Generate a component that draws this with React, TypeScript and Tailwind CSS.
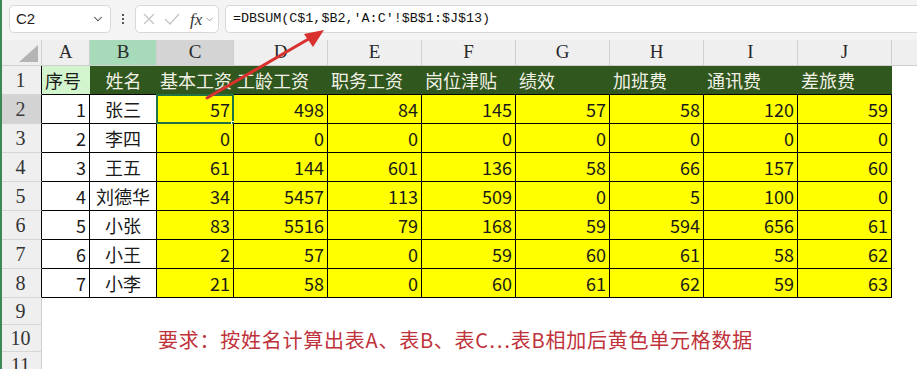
import { ChevronDown } from 'lucide-react';

const widths = ['w-[42px]', 'w-[48px]', 'w-[67px]', 'w-[77px]', 'w-[94px]', 'w-[94px]', 'w-[94px]', 'w-[94px]', 'w-[94px]', 'w-[94px]', 'w-[94px]'];
const letters = ['A', 'B', 'C', 'D', 'E', 'F', 'G', 'H', 'I', 'J'];
const titles = ['序号', '姓名', '基本工资', '工龄工资', '职务工资', '岗位津贴', '绩效', '加班费', '通讯费', '差旅费'];

const data: (number | string)[][] = [
  [1, '张三', 57, 498, 84, 145, 57, 58, 120, 59],
  [2, '李四', 0, 0, 0, 0, 0, 0, 0, 0],
  [3, '王五', 61, 144, 601, 136, 58, 66, 157, 60],
  [4, '刘德华', 34, 5457, 113, 509, 0, 5, 100, 0],
  [5, '小张', 83, 5516, 79, 168, 59, 594, 656, 61],
  [6, '小王', 2, 57, 0, 59, 60, 61, 58, 62],
  [7, '小李', 21, 58, 0, 60, 61, 62, 59, 63],
];

const serif = "font-['Liberation_Serif','Times_New_Roman',serif]";
const cjk = "font-['Noto_Sans_CJK_SC',sans-serif]";

function RowHead({ n, selected, dark }: { n: number; selected?: boolean; dark?: boolean }) {
  return (
    <div
      className={`${widths[0]} h-full shrink-0 flex items-center justify-center border-b border-b-[#d6d6d6] border-r ${dark ? 'border-r-black' : 'border-r-[#cfcfcf]'} ${selected ? 'bg-[#d3d3d3] text-[#3c3c3c]' : 'bg-[#efefef] text-[#333]'} ${serif} text-[20px]`}
    >
      {n}
    </div>
  );
}

function FormulaBar() {
  return (
    <div className="h-[40px] flex items-start pt-[5px] bg-[#f4f4f4]">
      <div className="ml-[9px] w-[102px] h-[28px] rounded-[5px] border border-[#d8d8d8] bg-white flex items-center justify-between pl-[6px] pr-[5px]">
        <span className="font-['Liberation_Sans',sans-serif] text-[15px] text-[#222]">C2</span>
        <ChevronDown size={14} strokeWidth={1.8} className="text-[#444]" />
      </div>
      <div className="w-[24px] h-[28px] flex flex-col items-center justify-center gap-[2px]">
        <span className="w-[2px] h-[2px] bg-[#555]" />
        <span className="w-[2px] h-[2px] bg-[#555]" />
        <span className="w-[2px] h-[2px] bg-[#555]" />
      </div>
      <div className="w-[84px] h-[28px] rounded-[5px] border border-[#d8d8d8] bg-white flex items-center pl-[7px] gap-[8px]">
        <svg width="12" height="12" viewBox="0 0 12 12" className="shrink-0">
          <path d="M1 1 L11 11 M11 1 L1 11" stroke="#c4c4c4" strokeWidth="1.3" />
        </svg>
        <svg width="16" height="12" viewBox="0 0 16 12" className="shrink-0 ml-[1px]">
          <path d="M1 6 L6 11 L15 1" stroke="#c4c4c4" strokeWidth="1.3" fill="none" />
        </svg>
        <span className={`${serif} italic text-[17px] text-[#333] leading-none ml-[2px]`}>fx</span>
        <ChevronDown size={11} strokeWidth={1.6} className="text-[#777] -ml-[6px]" />
      </div>
      <div className="ml-[6px] flex-1 h-[28px] rounded-l-[5px] border border-r-0 border-[#d8d8d8] bg-white flex items-center pl-[7px]">
        <span className="font-['Liberation_Mono',monospace] text-[13.4px] text-[#111]">=DBSUM(C$1,$B2,'A:C'!$B$1:$J$13)</span>
      </div>
    </div>
  );
}

function ColumnHeaders() {
  return (
    <div className="h-[26px] flex bg-[#efefef]">
      <div className={`${widths[0]} shrink-0 h-full border-r border-b border-[#cfcfcf] flex items-end justify-end pr-[3px] pb-[3px]`}>
        <svg width="19" height="17" viewBox="0 0 19 17">
          <polygon points="19,0 19,17 0,17" fill="#b4b4b4" />
        </svg>
      </div>
      {letters.map((l, i) => (
        <div
          key={l}
          className={`${widths[i + 1]} shrink-0 h-full border-r border-b border-[#cfcfcf] flex items-center justify-center ${serif} text-[19px] text-[#2a2a2a] ${i === 1 ? 'bg-[#a6dab9]' : i === 2 ? 'bg-[#d4d4d4]' : ''}`}
        >
          {l}
        </div>
      ))}
      <div className="flex-1 h-full border-b border-[#cfcfcf]" />
    </div>
  );
}

function TitleRow() {
  return (
    <div className={`h-[29px] flex ${cjk} text-[18px]`}>
      <RowHead n={1} dark />
      {titles.map((t, i) => (
        <div
          key={t}
          className={`${widths[i + 1]} shrink-0 h-full border-b border-black flex items-center whitespace-nowrap ${i === 0 ? 'bg-[#d3f5cd] text-[#1a1a1a] pl-[3px]' : 'bg-[#2f571e] text-[#f3f1e6]'} ${i === 1 ? 'justify-center' : i > 1 ? 'pl-[3px]' : ''}`}
        >
          {t}
        </div>
      ))}
      <div className="flex-1 h-full bg-white" />
    </div>
  );
}

function DataRow({ row, n }: { row: (number | string)[]; n: number }) {
  return (
    <div className={`h-[29px] flex ${cjk} text-[18px] text-[#1a1a1a]`}>
      <RowHead n={n} selected={n === 2} dark />
      {row.map((v, i) => (
        <div
          key={i}
          className={`${widths[i + 1]} shrink-0 h-full border-r border-b border-black flex items-center relative ${i === 1 ? 'justify-center bg-white' : 'justify-end pr-[3px]'} ${i === 0 ? 'bg-white' : ''} ${i > 1 ? 'bg-[#ffff00]' : ''}`}
        >
          {v}
          {n === 2 && i === 2 && (
            <>
              <div className="absolute -left-px -top-px -right-px -bottom-px border-2 border-[#217346]" />
              <div className="absolute -right-[4px] -bottom-[4px] w-[6px] h-[6px] bg-[#217346] border border-white" />
            </>
          )}
        </div>
      ))}
      <div className="flex-1 h-full bg-white" />
    </div>
  );
}

function EmptyRow({ n, children }: { n: number; children?: React.ReactNode }) {
  return (
    <div className="h-[27px] flex">
      <RowHead n={n} />
      <div className="flex-1 h-full bg-white flex items-center">{children}</div>
    </div>
  );
}

export default function App() {
  return (
    <div className="w-[917px] h-[369px] overflow-hidden bg-white border-l-2 border-[#3b8a55] relative">
      <div className="-ml-[2px]">
        <FormulaBar />
        <ColumnHeaders />
        <TitleRow />
        {data.map((r, idx) => (
          <DataRow key={idx} row={r} n={idx + 2} />
        ))}
        <EmptyRow n={9} />
        <EmptyRow n={10}>
          <span className={`ml-[116px] mt-[3px] ${cjk} text-[20px] text-[#c0323a] tracking-[0.75px] whitespace-nowrap`}>
            要求：按姓名计算出表A、表B、表C⋯表B相加后黄色单元格数据
          </span>
        </EmptyRow>
        <EmptyRow n={11} />
      </div>
      <svg className="absolute left-0 top-0 pointer-events-none" width="917" height="369">
        <line x1="205" y1="98" x2="310" y2="37" stroke="#d8312e" strokeWidth="3" strokeLinecap="round" />
        <polygon points="322,30 302,34 311,47" fill="#d8312e" />
      </svg>
    </div>
  );
}
